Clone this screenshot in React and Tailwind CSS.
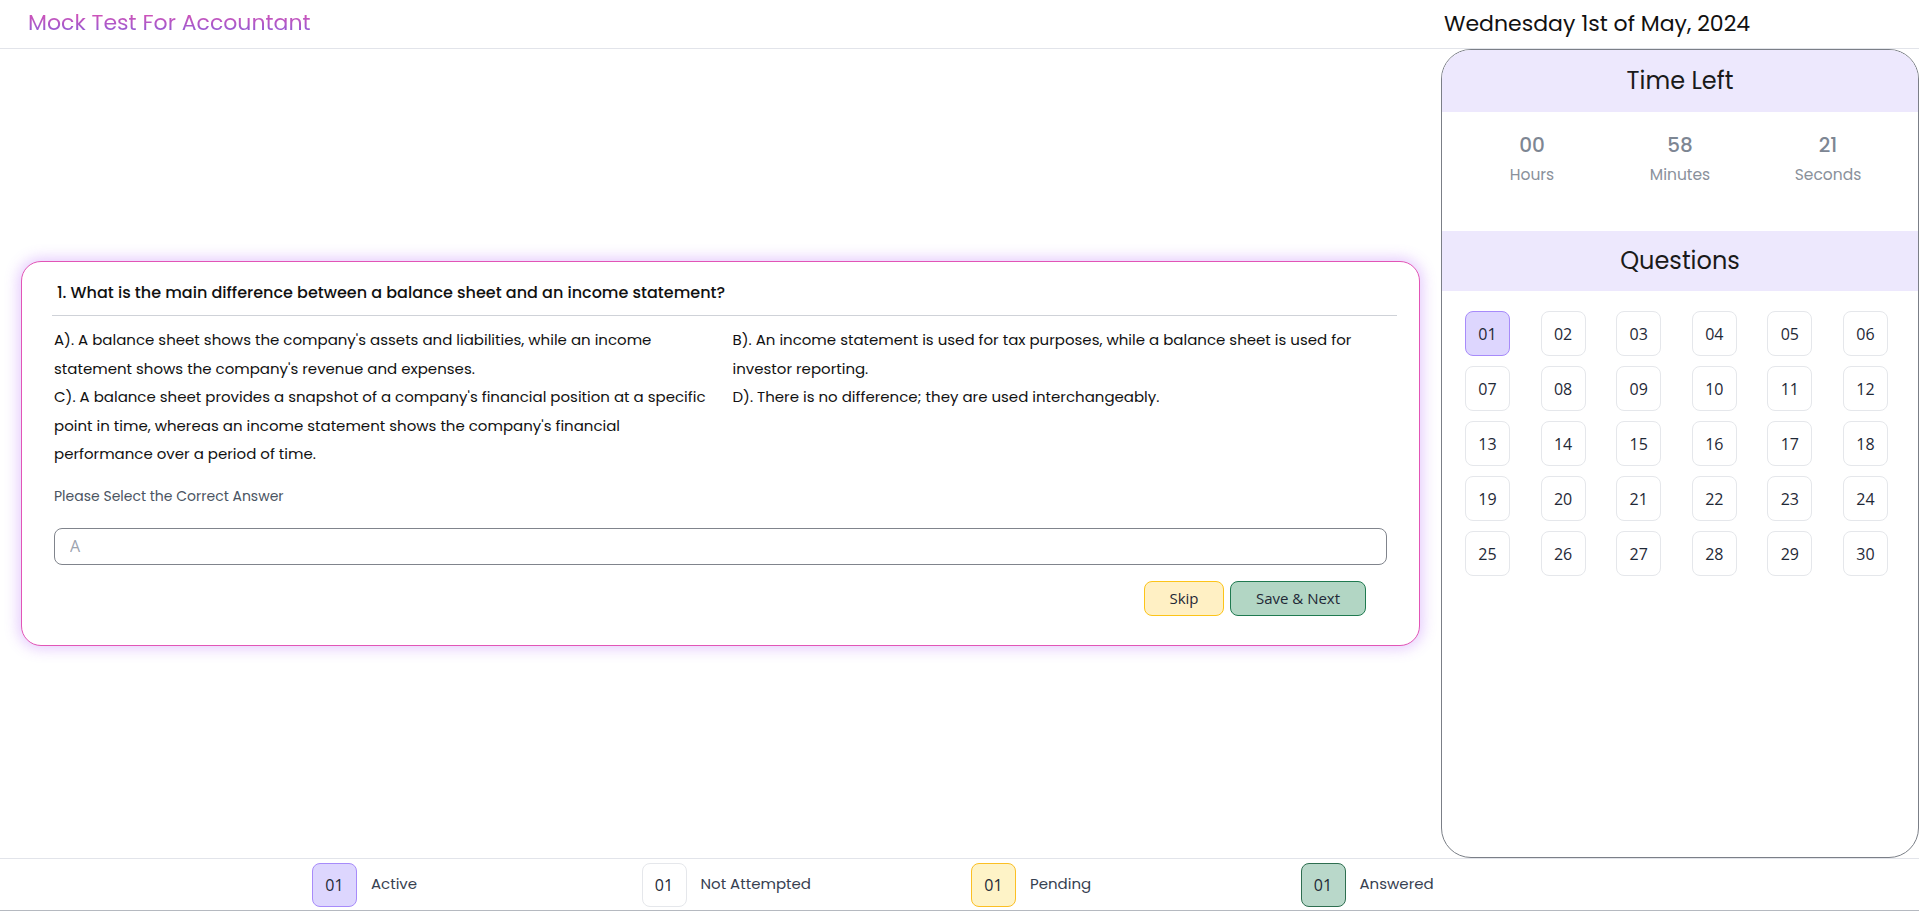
const questions = Array.from({ length: 30 }, (_, i) => String(i + 1).padStart(2, "0"));

const options = [
  "A). A balance sheet shows the company's assets and liabilities, while an income statement shows the company's revenue and expenses.",
  "B). An income statement is used for tax purposes, while a balance sheet is used for investor reporting.",
  "C). A balance sheet provides a snapshot of a company's financial position at a specific point in time, whereas an income statement shows the company's financial performance over a period of time.",
  "D). There is no difference; they are used interchangeably.",
];

const legend = [
  { label: "Active", box: "bg-[#ddd6fe] border-[#a78bfa]" },
  { label: "Not Attempted", box: "bg-white border-[#e5e7eb]" },
  { label: "Pending", box: "bg-[#fef3c7] border-[#fbbf24]" },
  { label: "Answered", box: "bg-[#b9d8ca] border-[#2e6e50]" },
];

export default function App() {
  return (
    <div className="h-[911px] w-full flex flex-col bg-white font-['Poppins','Open_Sans',sans-serif] text-[#1f2937]">
      <header className="h-[49px] shrink-0 flex items-center border-b border-[#e2e4ea]">
        <div className="flex-1 pl-[28px]">
          <h1 className="inline-block text-[22px] leading-none bg-linear-to-b from-[#d84fb4] to-[#8a5ad8] bg-clip-text text-transparent">
            Mock Test For Accountant
          </h1>
        </div>
        <div className="w-[478px] pl-[3px] text-[22px] leading-none text-[#111]">Wednesday 1st of May, 2024</div>
      </header>

      <div className="flex-1 flex min-h-0">
        <main className="flex-1 flex items-center px-[21px]">
          <div className="w-full rounded-[20px] border border-[#e255b6] bg-white shadow-[0_0_14px_3px_rgba(168,85,247,0.3)] pt-[19px] pb-[29px]">
            <p className="pl-[35px] text-[16px] leading-[24px] font-medium text-[#111]">
              1. What is the main difference between a balance sheet and an income statement?
            </p>
            <div className="mt-[10px] ml-[30px] mr-[22px] border-t border-[#cfd2d8]" />
            <div className="px-[32px] pt-[10px]">
              <div className="grid grid-cols-2 gap-x-6 text-[15px] leading-[28.5px] text-[#111]">
                {options.map((o) => (
                  <p key={o}>{o}</p>
                ))}
              </div>
              <p className="mt-[17px] text-[14px] leading-[20px] text-[#4b5563]">Please Select the Correct Answer</p>
              <input
                placeholder="A"
                className="mt-[22px] w-full h-[37px] rounded-lg border border-[#80848c] px-[15px] text-[16px] font-['Open_Sans',sans-serif] placeholder:text-[#9ca3af] outline-none"
              />
              <div className="mt-4 flex justify-end gap-[6px] pr-[21px] font-['Open_Sans',sans-serif] text-[15px]">
                <button className="w-[80px] h-[35px] rounded-lg border border-[#fcc419] bg-[#fff0c4] text-[#1f2937]">Skip</button>
                <button className="w-[136px] h-[35px] rounded-lg border border-[#1f7a50] bg-[#b2d6c4] text-[#1f2937]">Save &amp; Next</button>
              </div>
            </div>
          </div>
        </main>

        <aside className="w-[478px] shrink-0 rounded-[30px] border border-[#7b7f87] overflow-hidden flex flex-col">
          <div className="h-[62px] shrink-0 flex items-center justify-center bg-[#ede8fd] text-[24px] text-[#1a1a1a]">Time Left</div>
          <div className="h-[119px] shrink-0 grid grid-cols-3 px-4 pt-[19px]">
            {[
              ["00", "Hours"],
              ["58", "Minutes"],
              ["21", "Seconds"],
            ].map(([n, l]) => (
              <div key={l} className="flex flex-col items-center">
                <span className="text-[20px] leading-[28px] font-medium text-[#7d8693]">{n}</span>
                <span className="mt-[5px] text-[15.5px] leading-[22px] text-[#8a919b]">{l}</span>
              </div>
            ))}
          </div>
          <div className="h-[60px] shrink-0 flex items-center justify-center bg-[#ede8fd] text-[24px] text-[#1a1a1a]">Questions</div>
          <div className="grid grid-cols-[repeat(6,45px)] justify-between gap-y-[10px] pl-[23px] pr-[30px] pt-[20px] font-['Open_Sans',sans-serif] text-[16px]">
            {questions.map((q, i) => (
              <button
                key={q}
                className={
                  i === 0
                    ? "h-[45px] rounded-lg border border-[#a78bfa] bg-[#ddd6fe] text-[#1f2937]"
                    : "h-[45px] rounded-lg border border-[#e5e7eb] bg-white text-[#1f2937]"
                }
              >
                {q}
              </button>
            ))}
          </div>
        </aside>
      </div>

      <footer className="h-[53px] shrink-0 flex items-center border-t border-b border-t-[#e2e4ea] border-b-[#b5b9c0] pl-[312px]">
        {legend.map((l) => (
          <div key={l.label} className="w-[329.5px] flex items-center">
            <span
              className={`w-[45px] h-[44px] rounded-lg border flex items-center justify-center font-['Open_Sans',sans-serif] text-[16px] text-[#1f2937] ${l.box}`}
            >
              01
            </span>
            <span className="ml-[14px] text-[15px] text-[#374151]">{l.label}</span>
          </div>
        ))}
      </footer>
    </div>
  );
}
